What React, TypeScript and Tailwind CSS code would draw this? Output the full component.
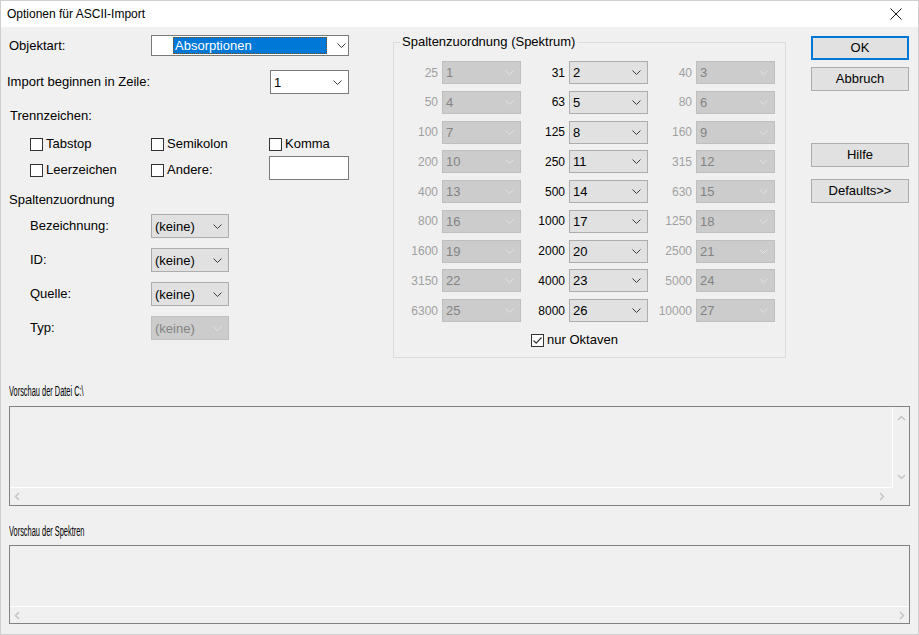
import React from 'react';

type ComboKind = 'white' | 'grey' | 'off';

const Chevron = ({ className = '' }: { className?: string }) => (
  <svg width="9" height="5" viewBox="0 0 9 5" className={className}>
    <path d="M0.5 0.5 L4.5 4.5 L8.5 0.5" fill="none" stroke="currentColor" strokeWidth="1" />
  </svg>
);

const ScrollArrow = ({ dir }: { dir: 'up' | 'down' | 'left' | 'right' }) => {
  const d = {
    up: 'M1 5 L4.5 1.5 L8 5',
    down: 'M1 1 L4.5 4.5 L8 1',
    left: 'M5 1 L1.5 4.5 L5 8',
    right: 'M1 1 L4.5 4.5 L1 8',
  }[dir];
  const vertical = dir === 'up' || dir === 'down';
  return (
    <svg width={vertical ? 9 : 6} height={vertical ? 6 : 9} viewBox={vertical ? '0 0 9 6' : '0 0 6 9'} className="text-[#c4c4c4]">
      <path d={d} fill="none" stroke="currentColor" strokeWidth="1.5" />
    </svg>
  );
};

function Combo({ value, kind, size }: { value: string; kind: ComboKind; size: string }) {
  const look =
    kind === 'white'
      ? 'bg-white border-[#7a7a7a] text-black'
      : kind === 'grey'
        ? 'bg-[#e1e1e1] border-[#adadad] text-black'
        : 'bg-[#cccccc] border-[#bfbfbf] text-[#838383]';
  return (
    <div className={`flex items-center border ${look} ${size}`}>
      <span className="flex-1 pl-[3px] leading-none">{value}</span>
      <Chevron className={`mr-[6px] ${kind === 'off' ? 'text-[#e2e2e2]' : 'text-[#3c3c3c]'}`} />
    </div>
  );
}

function Check({ label, checked = false }: { label?: string; checked?: boolean }) {
  return (
    <div className="flex items-center gap-[3px]">
      <div className="flex h-[13px] w-[13px] items-center justify-center border border-[#333333] bg-white">
        {checked && (
          <svg width="11" height="11" viewBox="0 0 11 11">
            <path d="M1.5 5.5 L4.2 8.2 L9.5 2.5" fill="none" stroke="#333333" strokeWidth="1.2" />
          </svg>
        )}
      </div>
      {label && <span>{label}</span>}
    </div>
  );
}

function Btn({ label, primary = false }: { label: string; primary?: boolean }) {
  return (
    <div
      className={`flex h-[24px] w-[98px] items-center justify-center bg-[#e1e1e1] ${
        primary ? 'border-2 border-[#0078d7]' : 'border border-[#adadad]'
      }`}
    >
      {label}
    </div>
  );
}

const spectrum = [
  [25, 31, 40],
  [50, 63, 80],
  [100, 125, 160],
  [200, 250, 315],
  [400, 500, 630],
  [800, 1000, 1250],
  [1600, 2000, 2500],
  [3150, 4000, 5000],
  [6300, 8000, 10000],
];

const fields = [
  { label: 'Bezeichnung:', kind: 'grey' as ComboKind },
  { label: 'ID:', kind: 'grey' as ComboKind },
  { label: 'Quelle:', kind: 'grey' as ComboKind },
  { label: 'Typ:', kind: 'off' as ComboKind },
];

export default function App() {
  return (
    <div className="flex h-[635px] w-[919px] flex-col border border-[#cfcfcf] bg-[#f0f0f0] font-['Liberation_Sans',Arial,sans-serif] text-[13px] text-black">
      {/* title bar */}
      <div className="flex h-[26px] shrink-0 items-center justify-between bg-white pl-[6px] pr-[16px] text-[12px]">
        <span>Optionen für ASCII-Import</span>
        <svg width="12" height="12" viewBox="0 0 12 12">
          <path d="M0.5 0.5 L11.5 11.5 M11.5 0.5 L0.5 11.5" stroke="#111" strokeWidth="1" />
        </svg>
      </div>

      <div className="flex">
        {/* left column */}
        <div className="flex w-[392px] flex-col pl-[7px]">
          <div className="mt-[8px] flex h-[21px] items-center">
            <span className="ml-[1px] w-[142px]">Objektart:</span>
            <div className="flex h-[21px] w-[198px] items-center border border-[#7a7a7a] bg-white pl-[21px]">
              <div className="flex h-[17px] w-[154px] items-center border border-dotted border-[#7a4a10] bg-[#0078d7] pl-[1px] text-white">
                Absorptionen
              </div>
              <Chevron className="ml-[10px] text-[#3c3c3c]" />
            </div>
          </div>

          <div className="mt-[14px] flex h-[24px] items-center">
            <span className="-ml-[1px] w-[263px]">Import beginnen in Zeile:</span>
            <Combo value="1" kind="white" size="h-[24px] w-[79px]" />
          </div>

          <div className="mt-[14px] flex h-[16px] items-center pl-[2px]">Trennzeichen:</div>

          <div className="mt-[12px] flex h-[16px] items-center pl-[22px]">
            <div className="w-[121px]">
              <Check label="Tabstop" />
            </div>
            <div className="w-[118px]">
              <Check label="Semikolon" />
            </div>
            <Check label="Komma" />
          </div>

          <div className="mt-[4px] flex h-[24px] items-center pl-[22px]">
            <div className="mt-[4px] w-[121px]">
              <Check label="Leerzeichen" />
            </div>
            <div className="mt-[4px] w-[118px]">
              <Check label="Andere:" />
            </div>
            <div className="h-[24px] w-[80px] border border-[#7a7a7a] bg-white" />
          </div>

          <div className="mt-[12px] flex h-[16px] items-center pl-[1px]">Spaltenzuordnung</div>

          <div className="mt-[6px] flex flex-col gap-[10px] pl-[22px]">
            {fields.map((f) => (
              <div key={f.label} className="flex h-[24px] items-center">
                <span className="w-[121px]">{f.label}</span>
                <Combo value="(keine)" kind={f.kind} size="h-[24px] w-[78px]" />
              </div>
            ))}
          </div>
        </div>

        {/* spectrum group */}
        <fieldset className="mx-0 mt-[7px] w-[393px] border border-[#dcdcdc] px-0 pb-[9px] pt-[11px]">
          <legend className="ml-[6px] px-[2px] leading-[16px]">Spaltenzuordnung (Spektrum)</legend>
          <div className="flex flex-col gap-[6.75px] pl-[5px]">
            {spectrum.map((row, r) => (
              <div key={r} className="flex gap-[5px]">
                {row.map((freq, c) => {
                  const on = c === 1;
                  return (
                    <div key={c} className="flex items-center gap-[4px]">
                      <span className={`w-[39px] text-right text-[12px] ${on ? 'text-black' : 'text-[#a0a0a0]'}`}>{freq}</span>
                      <Combo value={String(r * 3 + c + 1)} kind={on ? 'grey' : 'off'} size="h-[23px] w-[79px]" />
                    </div>
                  );
                })}
              </div>
            ))}
          </div>
          <div className="mt-[10px] flex h-[16px] items-center justify-center pr-[30px]">
            <Check label="nur Oktaven" checked />
          </div>
        </fieldset>

        {/* buttons */}
        <div className="ml-[25px] mt-[9px] flex flex-col">
          <Btn label="OK" primary />
          <div className="mt-[7px]">
            <Btn label="Abbruch" />
          </div>
          <div className="mt-[52px]">
            <Btn label="Hilfe" />
          </div>
          <div className="mt-[12px]">
            <Btn label="Defaults>>" />
          </div>
        </div>
      </div>

      {/* previews */}
      <div className="flex flex-col pl-[8px] pr-[8px]">
        <div className="mt-[25px] h-[16px] leading-[16px]">
          <span className="inline-block origin-left scale-x-[0.53] whitespace-nowrap text-[14px]">Vorschau der Datei C:\</span>
        </div>
        <div className="mt-[7px] flex h-[100px] flex-col border border-[#828282]">
          <div className="flex h-[81px]">
            <div className="flex-1 border-b border-r border-white" />
            <div className="flex w-[16px] flex-col items-center justify-between py-[8px]">
              <ScrollArrow dir="up" />
              <ScrollArrow dir="down" />
            </div>
          </div>
          <div className="flex flex-1 items-center justify-between pl-[4px] pr-[24px]">
            <ScrollArrow dir="left" />
            <ScrollArrow dir="right" />
          </div>
        </div>

        <div className="mt-[17px] h-[16px] leading-[16px]">
          <span className="inline-block origin-left scale-x-[0.53] whitespace-nowrap text-[14px]">Vorschau der Spektren</span>
        </div>
        <div className="mt-[6px] flex h-[79px] flex-col border border-[#828282]">
          <div className="h-[61px] border-b border-white" />
          <div className="flex flex-1 items-center justify-between px-[4px]">
            <ScrollArrow dir="left" />
            <ScrollArrow dir="right" />
          </div>
        </div>
      </div>
    </div>
  );
}
